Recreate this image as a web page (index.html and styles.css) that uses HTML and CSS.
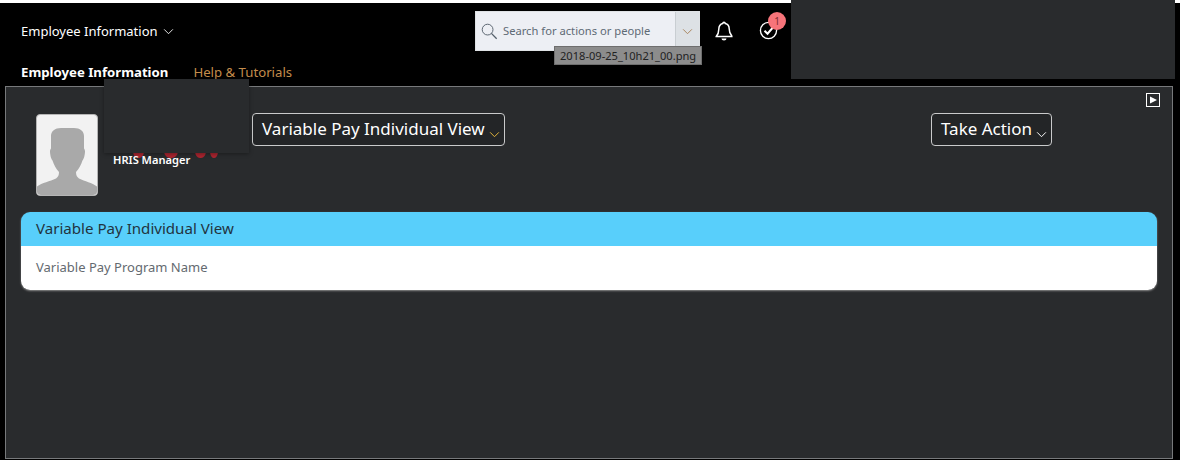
FILE: index.html
```html
<!DOCTYPE html>
<html lang="en">
<head>
<meta charset="utf-8">
<title>Variable Pay Individual View</title>
<link rel="stylesheet" href="styles.css">
</head>
<body>
<div class="page">
  <div class="top-strip"></div>
  <header class="shell">
    <div class="shell-row">
      <button class="module-btn">Employee Information
        <svg class="chev-sm" viewBox="0 0 12 8" width="11" height="7"><path d="M1 1.500 6 6.500 11 1.500" fill="none" stroke="#fff" stroke-width="1"/></svg>
      </button>
      <div class="search">
        <div class="search-field">
          <svg class="search-icon" viewBox="0 0 18 18" width="17" height="17"><circle cx="7" cy="7" r="5.700" fill="none" stroke="#55606b" stroke-width="1"/><path d="M11 11l5.600 5.600" stroke="#55606b" stroke-width="1.400"/></svg>
          <span>Search for actions or people</span>
        </div>
        <div class="search-drop">
          <svg viewBox="0 0 12 8" width="11" height="7"><path d="M1 1.500 6 6.500 11 1.500" fill="none" stroke="#a8835c" stroke-width="1.100"/></svg>
        </div>
      </div>
      <svg class="bell" viewBox="0 0 18 20" width="18" height="20"><path d="M9 1.200c.7 0 1.200.5 1.200 1.200 2.600.6 4 2.800 4 5.400 0 3.500.9 5.400 2.600 7.200v.6H1.200V15.400c1.700-1.800 2.600-3.700 2.600-7.200 0-2.600 1.400-5.200 4-5.800C7.800 1.700 8.300 1.200 9 1.200Z" fill="#000" stroke="#fff" stroke-width="1.500"/><path d="M6.500 17.500h5a2.500 2 0 0 1-5 0Z" fill="#fff"/></svg>
      <div class="todo">
        <svg viewBox="0 0 20 20" width="19" height="19"><circle cx="10" cy="10" r="8.500" fill="none" stroke="#fff" stroke-width="1.400"/><path d="M5.800 10.200 9 13.400 15.500 5.800" fill="none" stroke="#fff" stroke-width="2.100"/></svg>
        <span class="badge">1</span>
      </div>
    </div>
    <nav class="tabs">
      <a class="tab tab-active">Employee Information</a>
      <a class="tab">Help &amp; Tutorials</a>
    </nav>
  </header>
  <main class="panel">
    <div class="skip">
      <svg viewBox="0 0 14 14" width="14" height="14"><rect x=".5" y=".5" width="13" height="13" fill="none" stroke="#fff"/><path d="M4 3.500 11 7 4 10.500Z" fill="#fff"/></svg>
    </div>
    <div class="profile-row">
      <div class="avatar">
        <svg viewBox="0 0 60 80" width="60" height="80"><path d="M0 71.500C5 67.500 13 66.500 19 63.500 21 62 22 60.500 22 57 19 54 17 50 15.500 45.500 14 44 13 39 13 36.500 13 35 13.500 34 14 33.500V21C14 16 18 13 24 13H37C43 13 47 16 47 21V33.500C47.500 34 48 35 48 36.500 48 39 47 44 45.500 45.500 44 50 42 54 39 57 39 60.500 40 62 42 63.500 48 66.500 55 67.500 60 71.500V77C60 79 58 80 56 80H4C2 80 0 79 0 77Z" fill="#a9a9a9"/></svg>
      </div>
      <div class="person">
        <div class="person-name">
          <i class="blot blot-a"></i><i class="blot blot-b"></i><i class="blot blot-c"></i><i class="blot blot-d"></i>
        </div>
        <div class="person-role">HRIS Manager</div>
      </div>
      <button class="select-btn view-btn"><span>Variable Pay Individual View</span>
        <svg viewBox="0 0 12 8" width="11" height="7"><path d="M1 1.500 6 6.500 11 1.500" fill="none" stroke="#e8b93c" stroke-width="1.100"/></svg>
      </button>
      <button class="select-btn action-btn"><span>Take Action</span>
        <svg viewBox="0 0 12 8" width="11" height="7"><path d="M1 1.500 6 6.500 11 1.500" fill="none" stroke="#fff" stroke-width="1.100"/></svg>
      </button>
    </div>
    <section class="card">
      <h2 class="card-head">Variable Pay Individual View</h2>
      <div class="card-body">Variable Pay Program Name</div>
    </section>
  </main>
  <div class="mask mask-top"></div>
  <div class="mask mask-name"></div>
  <div class="file-tip">2018-09-25_10h21_00.png</div>
</div>
</body>
</html>
```
FILE: styles.css
```css
* { box-sizing: border-box; }
html, body { margin: 0; height: 100%; }
body { background: #000; font-family: "Noto Sans", "Open Sans", sans-serif; overflow: hidden; }
.page { position: relative; width: 1180px; height: 460px; background: #000; }
.top-strip { height: 3px; background: #fff; }
.shell { height: 83px; display: flex; flex-direction: column; }
.shell-row { display: flex; align-items: flex-start; padding: 8px 0 0 21px; height: 48px; }
.module-btn { display: flex; align-items: center; gap: 5px; height: 40px; padding: 0; border: 0; background: none; color: #fff; font: 13px "Noto Sans", sans-serif; width: 454px; }
.search { display: flex; width: 225px; height: 40px; background: #edeff4; border: 1px solid #dfe2e5; }
.search-field { display: flex; align-items: center; gap: 5px; padding: 0 0 2px 5px; flex: 1; color: #5e6a74; font-size: 11.200px; }
.search-icon { flex: none; margin-top: 2px; }
.search-drop { width: 24px; display: flex; align-items: center; justify-content: center; background: #dde1e5; border-left: 1px solid #c9ced2; }
.bell { margin: 10px 0 0 15px; }
.todo { position: relative; width: 19px; height: 19px; margin: 10px 0 0 26px; }
.todo svg { display: block; }
.badge { position: absolute; left: 9px; top: -9px; width: 18px; height: 18px; border-radius: 50%; background: #f7747a; color: #7d2a2e; font-size: 10px; line-height: 18px; text-align: center; }
.tabs { display: flex; gap: 25px; padding: 12px 0 0 21px; }
.tab { font-size: 13.200px; line-height: 18px; color: #c48d4c; }
.tab-active { color: #fff; font-weight: 700; }
.panel { position: relative; width: 1168px; height: 373px; margin-left: 5px; background: #292b2d; border: 1px solid #77797b; padding: 27px 15px 0; }
.skip { position: absolute; right: 12px; top: 6px; line-height: 0; }
.profile-row { display: flex; align-items: flex-start; height: 98px; }
.avatar { width: 62px; height: 82px; background: #f2f2f2; border: 1px solid #b5b5b5; border-radius: 4px; overflow: hidden; margin-left: 15px; line-height: 0; display: flex; align-items: flex-end; }
.person { width: 139px; padding: 28px 0 0 15px; margin-right: 15px; }
.person-name { display: flex; height: 11px; padding-left: 20px; }
.blot { height: 16px; background: #a8252f; border-radius: 45%; flex: none; }
.blot-a { width: 11px; }
.blot-b { width: 14px; margin-left: 20px; }
.blot-c { width: 11px; margin-left: 17px; }
.blot-d { width: 8px; margin-left: 4px; }
.person-role { position: relative; color: #fff; font-size: 11.100px; font-weight: 600; line-height: 14px; white-space: nowrap; }
.select-btn { display: flex; align-items: center; gap: 4px; height: 33px; margin-top: -1px; padding: 0 0 2px 9px; background: #232527; border: 1px solid #c9cacb; border-radius: 4px; color: #fff; font: 17px "Noto Sans", sans-serif; white-space: nowrap; }
.select-btn svg { margin-top: 11px; }
.view-btn { width: 253px; }
.action-btn { width: 121px; margin-left: 426px; }
.card { width: 1136px; border-radius: 9px; overflow: hidden; box-shadow: 0 1px 2px #8a8a8a; }
.card-head { margin: 0; height: 34px; padding-left: 15px; background: #58cffb; color: #22343f; font-size: 15.100px; font-weight: 400; line-height: 33px; }
.card-body { height: 44px; padding-left: 15px; background: #fff; color: #646a70; font-size: 13px; line-height: 43px; }
.mask { position: absolute; background: #292b2d; }
.mask-top { left: 791px; top: 0; width: 384px; height: 79px; }
.mask-name { left: 104px; top: 79px; width: 145px; height: 74px; box-shadow: 0 1px 4px rgba(0,0,0,.35); }
.file-tip { position: absolute; left: 554px; top: 46px; width: 148px; height: 19px; background: #8c8c8c; border: 1px solid #6e6e6e; color: #222; font-size: 11.100px; line-height: 17px; padding-left: 5px; white-space: nowrap; }
```
